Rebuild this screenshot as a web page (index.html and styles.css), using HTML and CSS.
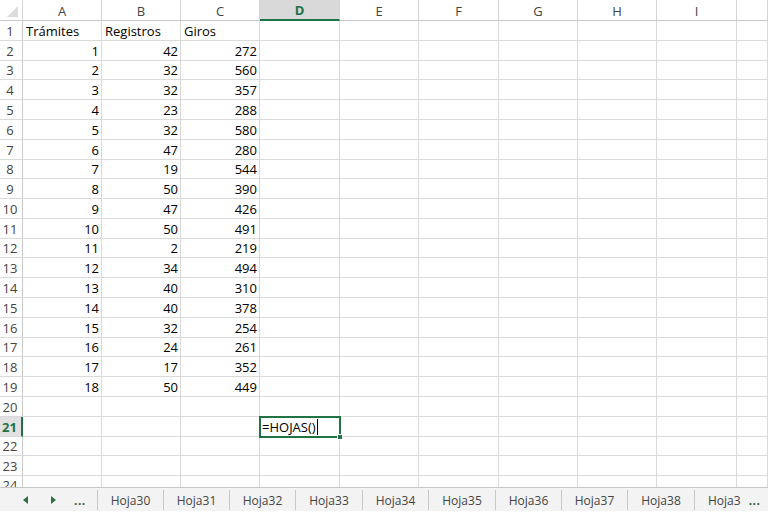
FILE: index.html
```html
<!DOCTYPE html>
<html lang="es">
<head>
<meta charset="utf-8">
<title>Hojas</title>
<link rel="stylesheet" href="styles.css">
</head>
<body>
<div class="sheet">
  <div class="h corner"><svg width="12" height="12" viewBox="0 0 12 12"><polygon points="11,0 11,11 0,11" fill="#dcdcdc"/></svg></div>
  <div class="h">A</div><div class="h">B</div><div class="h">C</div><div class="h hsel">D</div><div class="h">E</div><div class="h">F</div><div class="h">G</div><div class="h">H</div><div class="h">I</div><div class="h"></div>

  <div class="r">1</div><div class="c">Trámites</div><div class="c">Registros</div><div class="c">Giros</div><div class="c"></div><div class="c"></div><div class="c"></div><div class="c"></div><div class="c"></div><div class="c"></div><div class="c"></div>
  <div class="r">2</div><div class="c n">1</div><div class="c n">42</div><div class="c n">272</div><div class="c"></div><div class="c"></div><div class="c"></div><div class="c"></div><div class="c"></div><div class="c"></div><div class="c"></div>
  <div class="r">3</div><div class="c n">2</div><div class="c n">32</div><div class="c n">560</div><div class="c"></div><div class="c"></div><div class="c"></div><div class="c"></div><div class="c"></div><div class="c"></div><div class="c"></div>
  <div class="r">4</div><div class="c n">3</div><div class="c n">32</div><div class="c n">357</div><div class="c"></div><div class="c"></div><div class="c"></div><div class="c"></div><div class="c"></div><div class="c"></div><div class="c"></div>
  <div class="r">5</div><div class="c n">4</div><div class="c n">23</div><div class="c n">288</div><div class="c"></div><div class="c"></div><div class="c"></div><div class="c"></div><div class="c"></div><div class="c"></div><div class="c"></div>
  <div class="r">6</div><div class="c n">5</div><div class="c n">32</div><div class="c n">580</div><div class="c"></div><div class="c"></div><div class="c"></div><div class="c"></div><div class="c"></div><div class="c"></div><div class="c"></div>
  <div class="r">7</div><div class="c n">6</div><div class="c n">47</div><div class="c n">280</div><div class="c"></div><div class="c"></div><div class="c"></div><div class="c"></div><div class="c"></div><div class="c"></div><div class="c"></div>
  <div class="r">8</div><div class="c n">7</div><div class="c n">19</div><div class="c n">544</div><div class="c"></div><div class="c"></div><div class="c"></div><div class="c"></div><div class="c"></div><div class="c"></div><div class="c"></div>
  <div class="r">9</div><div class="c n">8</div><div class="c n">50</div><div class="c n">390</div><div class="c"></div><div class="c"></div><div class="c"></div><div class="c"></div><div class="c"></div><div class="c"></div><div class="c"></div>
  <div class="r">10</div><div class="c n">9</div><div class="c n">47</div><div class="c n">426</div><div class="c"></div><div class="c"></div><div class="c"></div><div class="c"></div><div class="c"></div><div class="c"></div><div class="c"></div>
  <div class="r">11</div><div class="c n">10</div><div class="c n">50</div><div class="c n">491</div><div class="c"></div><div class="c"></div><div class="c"></div><div class="c"></div><div class="c"></div><div class="c"></div><div class="c"></div>
  <div class="r">12</div><div class="c n">11</div><div class="c n">2</div><div class="c n">219</div><div class="c"></div><div class="c"></div><div class="c"></div><div class="c"></div><div class="c"></div><div class="c"></div><div class="c"></div>
  <div class="r">13</div><div class="c n">12</div><div class="c n">34</div><div class="c n">494</div><div class="c"></div><div class="c"></div><div class="c"></div><div class="c"></div><div class="c"></div><div class="c"></div><div class="c"></div>
  <div class="r">14</div><div class="c n">13</div><div class="c n">40</div><div class="c n">310</div><div class="c"></div><div class="c"></div><div class="c"></div><div class="c"></div><div class="c"></div><div class="c"></div><div class="c"></div>
  <div class="r">15</div><div class="c n">14</div><div class="c n">40</div><div class="c n">378</div><div class="c"></div><div class="c"></div><div class="c"></div><div class="c"></div><div class="c"></div><div class="c"></div><div class="c"></div>
  <div class="r">16</div><div class="c n">15</div><div class="c n">32</div><div class="c n">254</div><div class="c"></div><div class="c"></div><div class="c"></div><div class="c"></div><div class="c"></div><div class="c"></div><div class="c"></div>
  <div class="r">17</div><div class="c n">16</div><div class="c n">24</div><div class="c n">261</div><div class="c"></div><div class="c"></div><div class="c"></div><div class="c"></div><div class="c"></div><div class="c"></div><div class="c"></div>
  <div class="r">18</div><div class="c n">17</div><div class="c n">17</div><div class="c n">352</div><div class="c"></div><div class="c"></div><div class="c"></div><div class="c"></div><div class="c"></div><div class="c"></div><div class="c"></div>
  <div class="r">19</div><div class="c n">18</div><div class="c n">50</div><div class="c n">449</div><div class="c"></div><div class="c"></div><div class="c"></div><div class="c"></div><div class="c"></div><div class="c"></div><div class="c"></div>
  <div class="r">20</div><div class="c"></div><div class="c"></div><div class="c"></div><div class="c"></div><div class="c"></div><div class="c"></div><div class="c"></div><div class="c"></div><div class="c"></div><div class="c"></div>
  <div class="r rsel">21</div><div class="c"></div><div class="c"></div><div class="c"></div><div class="c active"><span class="formula">=HOJAS()</span><span class="caret"></span><span class="handle"></span></div><div class="c"></div><div class="c"></div><div class="c"></div><div class="c"></div><div class="c"></div><div class="c"></div>
  <div class="r">22</div><div class="c"></div><div class="c"></div><div class="c"></div><div class="c"></div><div class="c"></div><div class="c"></div><div class="c"></div><div class="c"></div><div class="c"></div><div class="c"></div>
  <div class="r">23</div><div class="c"></div><div class="c"></div><div class="c"></div><div class="c"></div><div class="c"></div><div class="c"></div><div class="c"></div><div class="c"></div><div class="c"></div><div class="c"></div>
  <div class="r r24">24</div><div class="c"></div><div class="c"></div><div class="c"></div><div class="c"></div><div class="c"></div><div class="c"></div><div class="c"></div><div class="c"></div><div class="c"></div><div class="c"></div>
</div>
<div class="tabbar">
  <div class="nav">
    <svg class="arrow" width="5" height="8" viewBox="0 0 5 8"><polygon points="5,0 5,8 0,4" fill="#2f6f46"/></svg>
    <svg class="arrow" width="5" height="8" viewBox="0 0 5 8"><polygon points="0,0 0,8 5,4" fill="#2f6f46"/></svg>
    <span class="more">...</span>
  </div>
  <div class="tab">Hoja30</div>
  <div class="tab">Hoja31</div>
  <div class="tab">Hoja32</div>
  <div class="tab wide">Hoja33</div>
  <div class="tab">Hoja34</div>
  <div class="tab wide">Hoja35</div>
  <div class="tab">Hoja36</div>
  <div class="tab">Hoja37</div>
  <div class="tab wide">Hoja38</div>
  <div class="tab last">Hoja3<span class="more endmore">...</span></div>
</div>
</body>
</html>
```

FILE: styles.css
```css
* { box-sizing: border-box; }

html, body {
  margin: 0;
  padding: 0;
  background: #ffffff;
  width: 768px;
  height: 516px;
  overflow: hidden;
}

body {
  font-family: "Open Sans", "Liberation Sans", sans-serif;
  color: #000;
}

.sheet {
  display: grid;
  grid-template-columns: 23px 79px 79px 79px 80px 79px 80px 79px 79px 80px 1fr;
  grid-template-rows: 21px 20px 20px 19px 20px 20px 20px 20px 19px 20px 20px 20px 19px 20px 20px 20px 20px 19px 20px 20px 20px 20px 19px 20px 12px;
  height: 487px;
  overflow: hidden;
}

.h {
  display: flex;
  align-items: center;
  justify-content: center;
  font-size: 13px;
  color: #444;
  border-right: 1px solid #d4d4d4;
  border-bottom: 1px solid #c9c9c9;
  background: #fff;
  padding-top: 1px;
}

.corner {
  align-items: flex-start;
  justify-content: flex-start;
  padding: 6px 0 0 7px;
}

.hsel {
  background: #d9d9d9;
  color: #217346;
  font-weight: 700;
  border-bottom: 2px solid #217346;
}

.r {
  display: flex;
  align-items: flex-end;
  justify-content: center;
  padding-right: 2px;
  padding-bottom: 0;
  font-size: 13px;
  line-height: 18px;
  color: #444;
  border-right: 1px solid #c9c9c9;
  border-bottom: 1px solid #dadada;
  overflow: hidden;
}

.rsel {
  background: #e1e1e1;
  color: #217346;
  font-weight: 700;
  border-right: 2px solid #217346;
}

.r24 {
  align-items: flex-start;
}

.c {
  display: flex;
  align-items: flex-end;
  padding: 0 2px 0 3px;
  font-size: 13px;
  line-height: 18px;
  white-space: nowrap;
  overflow: hidden;
  border-right: 1px solid #dadada;
  border-bottom: 1px solid #dadada;
}

.n {
  justify-content: flex-end;
}

.active {
  position: relative;
  overflow: visible;
  z-index: 2;
  padding-left: 2px;
}

.active::after {
  content: "";
  position: absolute;
  left: -1px;
  top: -1px;
  right: -2px;
  bottom: -2px;
  border: 2px solid #217346;
  pointer-events: none;
}

.caret {
  display: block;
  width: 1px;
  height: 16px;
  background: #000;
  margin-left: 1px;
  margin-bottom: 1px;
}

.handle {
  position: absolute;
  right: -4px;
  bottom: -4px;
  width: 6px;
  height: 6px;
  background: #217346;
  border: 1px solid #fff;
  z-index: 3;
}

.tabbar {
  display: flex;
  height: 24px;
  background: #f3f3f3;
  border-top: 1px solid #c6c6c6;
}

.nav {
  width: 97px;
  display: flex;
  align-items: center;
  padding-left: 23px;
}

.arrow {
  display: block;
  margin-right: 23px;
}

.arrow + .arrow {
  margin-right: 18px;
}

.more {
  color: #2f5f3f;
  font-weight: 700;
  font-size: 12px;
  letter-spacing: 0.5px;
  line-height: 12px;
  padding-top: 2px;
}

.tab {
  width: 66px;
  height: 20px;
  margin-top: 2px;
  display: flex;
  align-items: center;
  justify-content: center;
  font-size: 12px;
  color: #444;
  border-left: 1px solid #c8c8c8;
}

.wide {
  width: 67px;
}

.last {
  flex: 1;
  justify-content: flex-start;
  padding-left: 13px;
}

.endmore {
  margin-left: 8px;
}
```
